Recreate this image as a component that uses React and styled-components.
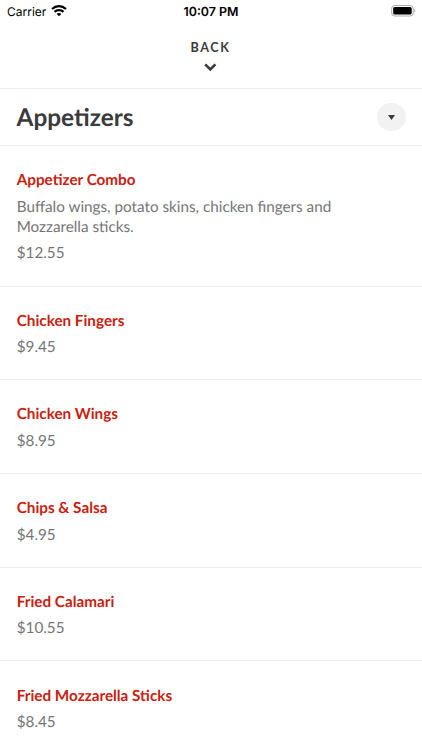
import React from 'react';
import styled, { createGlobalStyle } from 'styled-components';

const GlobalStyle = createGlobalStyle`
  * {
    box-sizing: border-box;
  }
  body {
    margin: 0;
    background: #fff;
    overflow: hidden;
    font-family: Lato, sans-serif;
    text-rendering: geometricPrecision;
  }
  h1, h2, p {
    margin: 0;
  }
`;
const Screen = styled.div`
  height: 750px;
  overflow: hidden;
  background: #fff;
`;
const StatusBar = styled.div`
  display: grid;
  grid-template-columns: 1fr auto 1fr;
  align-items: center;
  height: 22px;
  padding: 0 6px 0 7px;
  color: #000;
  font-family: Inter, sans-serif;
  font-size: 12px;
`;
const Carrier = styled.div`
  display: flex;
  align-items: center;
  gap: 4.5px;
`;
const Clock = styled.div`
  margin-right: 1px;
  font-size: 12.4px;
  font-weight: 600;
`;
const BatterySlot = styled.div`
  display: flex;
  justify-content: flex-end;
`;
const BackButton = styled.button`
  display: flex;
  flex-direction: column;
  align-items: center;
  gap: 8px;
  width: 100%;
  height: 67px;
  padding: 18px 1px 0 0;
  border: 0;
  border-bottom: 1px solid #efefef;
  background: none;
  color: #3b3b3b;
  font-family: Lato, sans-serif;
  font-size: 12.6px;
  font-weight: 700;
  line-height: 15px;
  letter-spacing: 1.6px;
`;
const SectionHeader = styled.div`
  display: flex;
  justify-content: space-between;
  align-items: center;
  height: 57px;
  padding: 0 16.5px;
  border-bottom: 1px solid #efefef;
`;
const SectionTitle = styled.h1`
  padding-top: 2px;
  color: #3b3b3b;
  font-size: 24.4px;
  font-weight: 700;
  line-height: 30px;
`;
const ToggleButton = styled.button`
  display: flex;
  justify-content: center;
  align-items: center;
  width: 28.5px;
  height: 28.5px;
  padding: 1px 0 0;
  border: 0;
  border-radius: 50%;
  background: #f2f2f2;
`;
const MenuItem = styled.div`
  height: ${({ $height }) => $height}px;
  padding: 24.2px 16.7px 0;
  border-bottom: 1px solid #efefef;
`;
const ItemName = styled.h2`
  color: #c9200f;
  font-size: 15.27px;
  font-weight: 700;
  line-height: 21px;
`;
const ItemText = styled.p`
  max-width: 340px;
  margin-top: 5.6px;
  color: #757575;
  font-size: 15.25px;
  line-height: 20.5px;
`;

const items = [
  {
    name: 'Appetizer Combo',
    description: 'Buffalo wings, potato skins, chicken fingers and Mozzarella sticks.',
    price: '$12.55',
    height: 140.6,
  },
  { name: 'Chicken Fingers', price: '$9.45', height: 93.7 },
  { name: 'Chicken Wings', price: '$8.95', height: 93.7 },
  { name: 'Chips & Salsa', price: '$4.95', height: 93.7 },
  { name: 'Fried Calamari', price: '$10.55', height: 93.7 },
  { name: 'Fried Mozzarella Sticks', price: '$8.45', height: 93.7 },
];

const WifiIcon = () => (
  <svg width="16" height="12" viewBox="0 0 16 12" fill="none" stroke="#000" strokeWidth="2.2">
    <path d="M1 4C5 .2 11 .2 15 4" />
    <path d="M3.5 6.9C6 4.6 10 4.6 12.5 6.9" />
    <path d="M8 11.3L5.6 9C7 7.8 9 7.8 10.4 9Z" fill="#000" stroke="none" />
  </svg>
);

const BatteryIcon = () => (
  <svg width="25" height="12" viewBox="0 0 25 12">
    <rect x=".7" y=".5" width="21.5" height="10.5" rx="3" fill="none" stroke="#aaa" />
    <rect x="2.2" y="2" width="18.5" height="7.5" rx="1.5" />
    <path d="M23.4 4C24.6 4.7 24.6 6.8 23.4 7.5Z" fill="#999" />
  </svg>
);

const App = () => (
  <Screen>
    <GlobalStyle />
    <StatusBar>
      <Carrier>
        Carrier
        <WifiIcon />
      </Carrier>
      <Clock>10:07 PM</Clock>
      <BatterySlot>
        <BatteryIcon />
      </BatterySlot>
    </StatusBar>
    <BackButton>
      BACK
      <svg width="13" height="9" viewBox="0 0 13 9" fill="none" stroke="#3b3b3b" strokeWidth="2.6">
        <path d="M1.2 1.3L6.3 6.4L11.4 1.3" />
      </svg>
    </BackButton>
    <SectionHeader>
      <SectionTitle>Appetizers</SectionTitle>
      <ToggleButton aria-label="Choose section">
        <svg width="7" height="5" viewBox="0 0 7 5">
          <path d="M0 0H7L3.5 5Z" fill="#3b3b3b" />
        </svg>
      </ToggleButton>
    </SectionHeader>
    {items.map(({ name, description, price, height }) => (
      <MenuItem key={name} $height={height}>
        <ItemName>{name}</ItemName>
        {description ? <ItemText>{description}</ItemText> : null}
        <ItemText>{price}</ItemText>
      </MenuItem>
    ))}
  </Screen>
);

export default App;
